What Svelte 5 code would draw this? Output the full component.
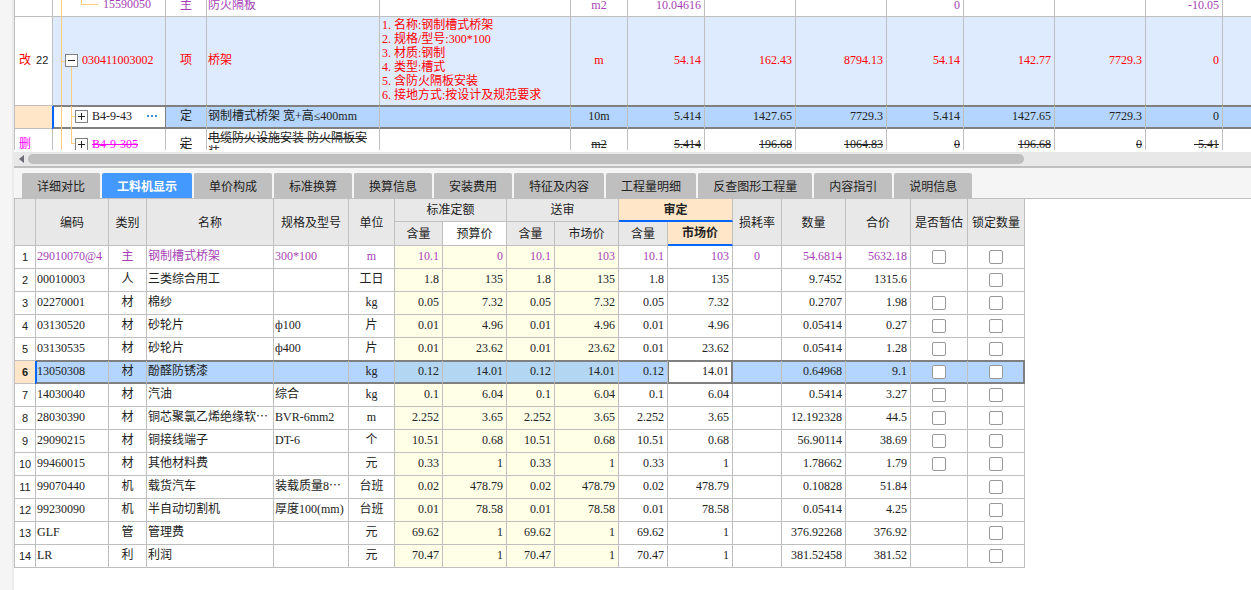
<script>
    const listWidths = ["38px", "113px", "41px", "173px", "191px", "57px", "77px", "91px", "91px", "77px", "91px", "91px", "77px", "auto"];
    const items = [
        {
            kind: "leaf",
            flag: "",
            no: "",
            code: "15590050",
            type: "主",
            name: "防火隔板",
            desc: [],
            unit: "m2",
            values: ["10.04616", "", "", "0", "", "", "-10.05"],
        },
        {
            kind: "parent",
            flag: "改",
            no: "22",
            code: "030411003002",
            type: "项",
            name: "桥架",
            desc: [
                "1. 名称:钢制槽式桥架",
                "2. 规格/型号:300*100",
                "3. 材质:钢制",
                "4. 类型:槽式",
                "5. 含防火隔板安装",
                "6. 接地方式:按设计及规范要求",
            ],
            unit: "m",
            values: ["54.14", "162.43", "8794.13", "54.14", "142.77", "7729.3", "0"],
        },
        {
            kind: "current",
            flag: "",
            no: "",
            code: "B4-9-43",
            type: "定",
            name: "钢制槽式桥架 宽+高≤400mm",
            desc: [],
            unit: "10m",
            values: ["5.414", "1427.65", "7729.3", "5.414", "1427.65", "7729.3", "0"],
        },
        {
            kind: "removed",
            flag: "删",
            no: "",
            code: "B4-9-305",
            type: "定",
            name: "电缆防火设施安装 防火隔板安装",
            desc: [],
            unit: "m2",
            values: ["5.414", "196.68", "1064.83", "0", "196.68", "0", "-5.41"],
        },
    ];

    const tabs = [
        "详细对比",
        "工料机显示",
        "单价构成",
        "标准换算",
        "换算信息",
        "安装费用",
        "特征及内容",
        "工程量明细",
        "反查图形工程量",
        "内容指引",
        "说明信息",
    ];
    let activeTab = $state("工料机显示");

    const resWidths = [21, 73, 38, 127, 75, 46, 48, 64, 48, 64, 49, 65, 49, 64, 65, 57, 57];
    // code, type, name, spec, unit, amount, budget price, market price, loss, quantity, total, estimated
    const resources = [
        ["29010070@4", "主", "钢制槽式桥架", "300*100", "m", "10.1", "0", "103", "0", "54.6814", "5632.18", true],
        ["00010003", "人", "三类综合用工", "", "工日", "1.8", "135", "135", "", "9.7452", "1315.6", false],
        ["02270001", "材", "棉纱", "", "kg", "0.05", "7.32", "7.32", "", "0.2707", "1.98", true],
        ["03130520", "材", "砂轮片", "ф100", "片", "0.01", "4.96", "4.96", "", "0.05414", "0.27", true],
        ["03130535", "材", "砂轮片", "ф400", "片", "0.01", "23.62", "23.62", "", "0.05414", "1.28", true],
        ["13050308", "材", "酚醛防锈漆", "", "kg", "0.12", "14.01", "14.01", "", "0.64968", "9.1", true],
        ["14030040", "材", "汽油", "综合", "kg", "0.1", "6.04", "6.04", "", "0.5414", "3.27", true],
        ["28030390", "材", "铜芯聚氯乙烯绝缘软⋯", "BVR-6mm2", "m", "2.252", "3.65", "3.65", "", "12.192328", "44.5", true],
        ["29090215", "材", "铜接线端子", "DT-6", "个", "10.51", "0.68", "0.68", "", "56.90114", "38.69", true],
        ["99460015", "材", "其他材料费", "", "元", "0.33", "1", "1", "", "1.78662", "1.79", true],
        ["99070440", "机", "载货汽车", "装载质量8⋯", "台班", "0.02", "478.79", "478.79", "", "0.10828", "51.84", false],
        ["99230090", "机", "半自动切割机", "厚度100(mm)", "台班", "0.01", "78.58", "78.58", "", "0.05414", "4.25", false],
        ["GLF", "管", "管理费", "", "元", "69.62", "1", "1", "", "376.92268", "376.92", false],
        ["LR", "利", "利润", "", "元", "70.47", "1", "1", "", "381.52458", "381.52", false],
    ];
    const currentRow = 5;
</script>

<div class="page">
    <main>
        <div class="list">
            <table>
                <colgroup>
                    {#each listWidths as w}
                        <col style="width: {w}" />
                    {/each}
                </colgroup>
                <tbody>
                    {#each items as item}
                        <tr class={item.kind}>
                            <td class="flag">
                                <div><span>{item.flag}</span><span class="no">{item.no}</span></div>
                            </td>
                            <td class="code">
                                {#if item.kind == "leaf"}
                                    <i class="trunk"></i>
                                    <i class="elbow inner"></i>
                                    <span class="leaf-code">{item.code}</span>
                                {:else if item.kind == "parent"}
                                    <i class="trunk"></i>
                                    <i class="tick"></i>
                                    <i class="drop"></i>
                                    <div class="node">
                                        <button class="toggle open" aria-label="收起"></button>
                                        <span>{item.code}</span>
                                    </div>
                                {:else}
                                    <i class="trunk"></i>
                                    <i class="elbow"></i>
                                    {#if item.kind == "current"}<i class="trunk second"></i>{/if}
                                    <div class="node child">
                                        <button class="toggle" aria-label="展开"></button>
                                        <span>{item.code}</span>
                                        {#if item.kind == "current"}
                                            <button class="more" aria-label="更多">
                                                <svg width="10" height="2" viewBox="0 0 10 2">
                                                    <path d="M0 0h2v2H0zM4 0h2v2H4zM8 0h2v2H8z" fill="#3a8fd6" />
                                                </svg>
                                            </button>
                                        {/if}
                                    </div>
                                {/if}
                            </td>
                            <td class="center">{item.type}</td>
                            <td class="name">{item.name}</td>
                            <td class="desc">
                                {#each item.desc as line}
                                    <div>{line}</div>
                                {/each}
                            </td>
                            <td class="center">{item.unit}</td>
                            {#each item.values as value}
                                <td class="num">{value}</td>
                            {/each}
                            <td class="last"></td>
                        </tr>
                    {/each}
                </tbody>
            </table>
        </div>
        <div class="scrollbar">
            <svg width="5" height="8" viewBox="0 0 5 8"><path d="M5 0v8L0 4z" fill="#6b6b75" /></svg>
            <div class="track"><div class="thumb"></div></div>
        </div>

        <nav>
            {#each tabs as tab}
                <button class="tab" class:active={tab == activeTab} onclick={() => (activeTab = tab)}>{tab}</button>
            {/each}
        </nav>

        <table class="resources">
            <colgroup>
                {#each resWidths as w}
                    <col style="width: {w}px" />
                {/each}
            </colgroup>
            <thead>
                <tr>
                    <th rowspan="2"></th>
                    <th rowspan="2">编码</th>
                    <th rowspan="2">类别</th>
                    <th rowspan="2">名称</th>
                    <th rowspan="2">规格及型号</th>
                    <th rowspan="2">单位</th>
                    <th colspan="2">标准定额</th>
                    <th colspan="2">送审</th>
                    <th colspan="2" class="hot">审定</th>
                    <th rowspan="2">损耗率</th>
                    <th rowspan="2">数量</th>
                    <th rowspan="2">合价</th>
                    <th rowspan="2">是否暂估</th>
                    <th rowspan="2">锁定数量</th>
                </tr>
                <tr class="sub">
                    <th>含量</th>
                    <th class="plain">预算价</th>
                    <th>含量</th>
                    <th>市场价</th>
                    <th>含量</th>
                    <th class="hot">市场价</th>
                </tr>
            </thead>
            <tbody>
                {#each resources as [code, type, name, spec, unit, amount, budget, market, loss, qty, total, estimate], i}
                    <tr class:main={i == 0} class:selected={i == currentRow}>
                        <td class="index">{i + 1}</td>
                        <td class="code">{code}</td>
                        <td class="center">{type}</td>
                        <td>{name}</td>
                        <td>{spec}</td>
                        <td class="center">{unit}</td>
                        <td class="num quota">{amount}</td>
                        <td class="num quota">{budget}</td>
                        <td class="num quota">{amount}</td>
                        <td class="num quota">{market}</td>
                        <td class="num">{amount}</td>
                        <td class="num price">{market}</td>
                        <td class="center">{loss}</td>
                        <td class="num">{qty}</td>
                        <td class="num">{total}</td>
                        <td class="check">
                            {#if estimate}<input type="checkbox" aria-label="是否暂估" />{/if}
                        </td>
                        <td class="check"><input type="checkbox" aria-label="锁定数量" /></td>
                    </tr>
                {/each}
            </tbody>
        </table>
    </main>
</div>

<style>
    :global(body) {
        margin: 0;
        background-color: #f5f5f5;
    }
    .page {
        min-height: 100vh;
        padding-left: 12px;
        box-sizing: border-box;
        display: flex;
        overflow: hidden;
        color: #222;
        font-family: "Liberation Serif", "Noto Sans CJK SC", serif;
        font-size: 12px;
        line-height: 14px;
    }
    main {
        flex: 1;
        min-width: 0;
        border-left: 2px solid #ebebeb;
        background-color: #fff;
    }
    table {
        table-layout: fixed;
        border-collapse: separate;
        border-spacing: 0;
        border-left: 1px solid #bfbfbf;
    }
    td,
    th {
        box-sizing: border-box;
        height: 23px;
        padding: 0 3px 2px 1px;
        border-right: 1px solid #bfbfbf;
        border-bottom: 1px solid #bfbfbf;
        font-weight: normal;
        text-align: left;
        vertical-align: middle;
        white-space: nowrap;
    }
    td.center {
        padding: 0 0 2px;
        text-align: center;
    }
    td.check {
        padding: 0;
    }
    .num {
        text-align: right;
    }
    button {
        border: none;
        padding: 0;
        font: inherit;
        color: inherit;
    }

    /* bill list */
    .list {
        height: 150px;
        border-bottom: 2px solid #fff;
        overflow: hidden;
    }
    .list table {
        width: 100%;
        margin-top: -7px;
    }
    .list td.last {
        border-right: none;
    }
    .list .leaf td {
        height: 24px;
        padding-bottom: 0;
    }
    .leaf {
        color: #a63fb5;
    }
    .parent {
        color: #f00;
    }
    .parent td {
        height: 89px;
        background-color: #deeafe;
    }
    .list td.flag {
        padding-left: 4px;
        background-color: #fff;
    }
    .flag div {
        display: flex;
        gap: 5px;
    }
    .no {
        color: #222;
        font-family: "Liberation Sans", sans-serif;
        font-size: 11px;
    }
    .list td.name,
    .list td.desc {
        white-space: normal;
    }
    .list td.desc {
        padding-left: 2px;
    }
    .list td.code {
        position: relative;
        padding: 0 0 2px;
    }
    .list .code i {
        position: absolute;
        box-sizing: border-box;
    }
    .trunk {
        left: 8px;
        top: 0;
        bottom: -1px;
        border-left: 1px solid #ffcc80;
    }
    .trunk.second {
        left: 18px;
    }
    .tick {
        left: 8px;
        top: 50%;
        width: 5px;
        border-top: 1px solid #ffcc80;
    }
    .drop {
        left: 18px;
        top: 50%;
        bottom: -1px;
        border-left: 1px solid #ffcc80;
    }
    .elbow {
        left: 18px;
        top: 0;
        bottom: 50%;
        width: 5px;
        border-left: 1px solid #ffcc80;
        border-bottom: 1px solid #ffcc80;
    }
    .elbow.inner {
        left: 28px;
        width: 17px;
    }
    .leaf-code {
        padding-left: 50px;
    }
    .node {
        position: relative;
        display: flex;
        align-items: center;
        gap: 4px;
        padding-left: 12px;
    }
    .node.child {
        padding-left: 22px;
    }
    .toggle {
        width: 13px;
        height: 13px;
        border: 1px solid #808080;
        background:
            linear-gradient(#222, #222) center / 7px 1px no-repeat,
            linear-gradient(#222, #222) center / 1px 7px no-repeat,
            #fff;
    }
    .toggle.open {
        background:
            linear-gradient(#222, #222) center / 7px 1px no-repeat,
            #fff;
    }
    .more {
        display: flex;
        margin-left: auto;
        margin-right: 8px;
        background: none;
    }
    .current td {
        background-color: #b3d5ff;
    }
    .list .current td.flag {
        background-color: #ffe6c8;
    }
    .current td.code {
        background-color: #fff;
        border-right-color: #808080;
    }
    .list .removed td {
        height: 31px;
        padding-bottom: 0;
        text-decoration: line-through;
    }
    .list .removed td.name {
        vertical-align: top;
        padding-top: 2px;
    }
    .removed .flag,
    .removed .code {
        color: #f0f;
    }
    .list .removed td.flag {
        text-decoration: none;
    }

    /* frame and marker of the current row in both grids */
    .current td:not(.flag),
    .selected td:not(.index) {
        border-bottom-color: #808080;
        box-shadow:
            inset 0 1px #808080,
            inset 0 -1px #808080,
            0 -1px #808080;
    }
    .current td.code,
    .selected td.code {
        box-shadow:
            inset 1px 0 #0066ff,
            -1px 0 #0066ff,
            inset 0 1px #808080,
            inset 0 -1px #808080,
            0 -1px #808080;
    }
    .selected td.price {
        background-color: #fff;
        border-right-color: #808080;
        box-shadow:
            inset 0 0 0 1px #808080,
            0 -1px #808080;
    }
    .selected td:last-child {
        border-right-color: #808080;
        box-shadow:
            inset -1px 0 #808080,
            inset 0 1px #808080,
            inset 0 -1px #808080,
            0 -1px #808080;
    }

    .scrollbar {
        display: flex;
        align-items: center;
        gap: 4px;
        height: 14px;
        padding-left: 5px;
        background-color: #e8e8e8;
        border-bottom: 2px solid #bfbfbf;
    }
    .track {
        flex: 1;
    }
    .thumb {
        width: 81.4%;
        height: 10px;
        border-radius: 5px;
        background-color: #bfbfbf;
    }

    nav {
        display: flex;
        gap: 2px;
        padding: 5px 8px 0;
        background-color: #f5f5f5;
        border-bottom: 1px solid #bfbfbf;
    }
    .tab {
        height: 25px;
        padding: 0 15px;
        border-radius: 2px 2px 0 0;
        background-color: #bfbfbf;
        font-family: "Noto Sans CJK SC", sans-serif;
        white-space: nowrap;
    }
    .tab.active {
        background-color: #4499ff;
        color: #fff;
        font-weight: bold;
    }

    /* resource grid */
    .resources {
        width: 1011px;
    }
    .resources th {
        padding: 0;
        text-align: center;
        background-color: #e8e8e8;
    }
    .resources th[rowspan] {
        padding-top: 2px;
    }
    .resources .sub th {
        height: 24px;
    }
    .resources th.plain {
        background-color: #fff;
    }
    .resources th.hot {
        background-color: #ffe6c8;
        border-bottom: 2px solid #0066ff;
        font-weight: bold;
    }
    .main {
        color: #a63fb5;
    }
    .resources td.index {
        padding: 0;
        color: #222;
        font-family: "Liberation Sans", sans-serif;
        font-size: 11px;
        text-align: center;
    }
    .quota {
        background-color: #ffffe8;
    }
    .selected td:not(.price) {
        background-color: #b3d5ff;
    }
    .selected td.quota:not(.price) {
        background-color: #b3d7f2;
    }
    .selected td.index:not(.price) {
        background-color: #ffe6c8;
        font-weight: bold;
    }
    input {
        appearance: none;
        display: block;
        box-sizing: border-box;
        width: 14px;
        height: 14px;
        margin: 0 auto;
        border: 1px solid #999;
        border-radius: 2px;
        background-color: #fff;
    }
    input:checked {
        background-color: #4499ff;
    }
</style>
